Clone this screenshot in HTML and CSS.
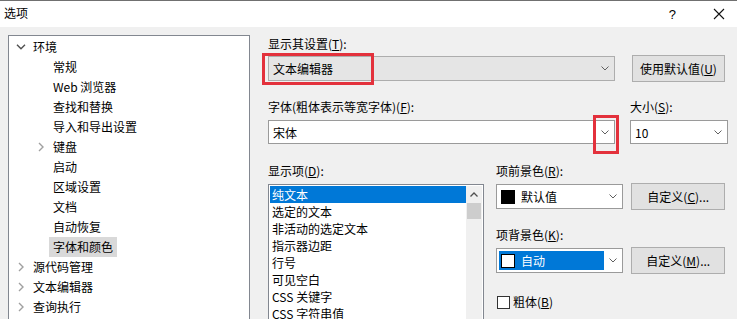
FILE: index.html
```html
<!DOCTYPE html>
<html lang="zh-CN">
<head>
<meta charset="utf-8">
<title>选项</title>
<link rel="stylesheet" href="styles.css">
</head>
<body>
<div class="window">
  <div class="titlebar">
    <span class="title">选项</span>
    <span class="help">?</span>
    <span class="close"><svg width="12" height="12" viewBox="0 0 12 12"><path d="M1 1 L11 11 M11 1 L1 11" stroke="#111" stroke-width="1.1" fill="none"/></svg></span>
  </div>
  <div class="main">
    <div class="tree">
      <div class="node l0"><span class="twisty"><svg width="10" height="6" viewBox="0 0 10 6"><path d="M1 0.8 L5 4.8 L9 0.8" stroke="#505050" stroke-width="1.4" fill="none"/></svg></span><span class="txt">环境</span></div>
      <div class="node l1"><span class="twisty"></span><span class="txt">常规</span></div>
      <div class="node l1"><span class="twisty"></span><span class="txt">Web 浏览器</span></div>
      <div class="node l1"><span class="twisty"></span><span class="txt">查找和替换</span></div>
      <div class="node l1"><span class="twisty"></span><span class="txt">导入和导出设置</span></div>
      <div class="node l1"><span class="twisty"><svg width="6" height="10" viewBox="0 0 6 10"><path d="M1 1 L5 5 L1 9" stroke="#a0a0a0" stroke-width="1.4" fill="none"/></svg></span><span class="txt">键盘</span></div>
      <div class="node l1"><span class="twisty"></span><span class="txt">启动</span></div>
      <div class="node l1"><span class="twisty"></span><span class="txt">区域设置</span></div>
      <div class="node l1"><span class="twisty"></span><span class="txt">文档</span></div>
      <div class="node l1"><span class="twisty"></span><span class="txt">自动恢复</span></div>
      <div class="node l1"><span class="twisty"></span><span class="txt sel">字体和颜色</span></div>
      <div class="node l0"><span class="twisty"><svg width="6" height="10" viewBox="0 0 6 10"><path d="M1 1 L5 5 L1 9" stroke="#a0a0a0" stroke-width="1.4" fill="none"/></svg></span><span class="txt">源代码管理</span></div>
      <div class="node l0"><span class="twisty"><svg width="6" height="10" viewBox="0 0 6 10"><path d="M1 1 L5 5 L1 9" stroke="#a0a0a0" stroke-width="1.4" fill="none"/></svg></span><span class="txt">文本编辑器</span></div>
      <div class="node l0"><span class="twisty"><svg width="6" height="10" viewBox="0 0 6 10"><path d="M1 1 L5 5 L1 9" stroke="#a0a0a0" stroke-width="1.4" fill="none"/></svg></span><span class="txt">查询执行</span></div>
    </div>

    <div class="panel">
      <div class="label">显示其设置(<u>T</u>):</div>
      <div class="row row-show">
        <div class="combo combo-ro combo-wide">
          <span class="ctext">文本编辑器</span>
          <svg class="arrow" width="8" height="5" viewBox="0 0 8 5"><path d="M0.5 0.5 L4 4 L7.5 0.5" stroke="#606060" fill="none"/></svg>
          <div class="mark mark-show"></div>
        </div>
        <div class="btn btn-default">使用默认值(<u>U</u>)</div>
      </div>

      <div class="row row-font">
        <div class="field">
          <div class="label">字体(粗体表示等宽字体)(<u>F</u>):</div>
          <div class="combo combo-wide combo-edit">
            <span class="ctext">宋体</span>
            <svg class="arrow" width="8" height="5" viewBox="0 0 8 5"><path d="M0.5 0.5 L4 4 L7.5 0.5" stroke="#606060" fill="none"/></svg>
            <div class="mark mark-font"></div>
          </div>
        </div>
        <div class="field">
          <div class="label">大小(<u>S</u>):</div>
          <div class="combo combo-size combo-edit">
            <span class="ctext">10</span>
            <svg class="arrow" width="8" height="5" viewBox="0 0 8 5"><path d="M0.5 0.5 L4 4 L7.5 0.5" stroke="#606060" fill="none"/></svg>
          </div>
        </div>
      </div>

      <div class="row row-items">
        <div class="items-col">
          <div class="label">显示项(<u>D</u>):</div>
          <div class="listbox">
            <div class="list">
              <div class="item active">纯文本</div>
              <div class="item">选定的文本</div>
              <div class="item">非活动的选定文本</div>
              <div class="item">指示器边距</div>
              <div class="item">行号</div>
              <div class="item">可见空白</div>
              <div class="item">CSS 关键字</div>
              <div class="item">CSS 字符串值</div>
            </div>
            <div class="scrollbar">
              <div class="sb-up"><svg width="8" height="5" viewBox="0 0 8 5"><path d="M0.5 4.5 L4 1 L7.5 4.5" stroke="#505050" stroke-width="1.3" fill="none"/></svg></div>
              <div class="sb-thumb"></div>
            </div>
          </div>
        </div>

        <div class="props-col">
          <div class="label">项前景色(<u>R</u>):</div>
          <div class="row prop-row">
            <div class="combo combo-color combo-edit">
              <span class="swatch swatch-black"></span>
              <span class="ctext">默认值</span>
              <svg class="arrow" width="8" height="5" viewBox="0 0 8 5"><path d="M0.5 0.5 L4 4 L7.5 0.5" stroke="#606060" fill="none"/></svg>
            </div>
            <div class="btn btn-custom">自定义(<u>C</u>)...</div>
          </div>
          <div class="label label-bg">项背景色(<u>K</u>):</div>
          <div class="row prop-row">
            <div class="combo combo-color combo-edit">
              <span class="focus-sel"><span class="swatch swatch-white"></span><span class="ctext">自动</span></span>
              <svg class="arrow" width="8" height="5" viewBox="0 0 8 5"><path d="M0.5 0.5 L4 4 L7.5 0.5" stroke="#606060" fill="none"/></svg>
            </div>
            <div class="btn btn-custom">自定义(<u>M</u>)...</div>
          </div>
          <div class="check-row">
            <span class="checkbox"></span>
            <span class="check-label">粗体(<u>B</u>)</span>
          </div>
        </div>
      </div>
    </div>
  </div>
</div>
</body>
</html>
```

FILE: styles.css
```css
* { box-sizing: border-box; }

html, body {
  margin: 0;
  padding: 0;
  width: 737px;
  height: 319px;
  overflow: hidden;
  background: #f0f0f0;
}

body {
  font-family: "Noto Sans CJK SC", "Noto Sans", sans-serif;
  font-size: 12px;
  color: #000;
}

u { text-decoration: underline; text-underline-offset: 1px; }

.window {
  width: 737px;
  height: 319px;
  display: flex;
  flex-direction: column;
}

/* Title bar */
.titlebar {
  height: 27px;
  flex: none;
  background: #fff;
  border-top: 1px solid #707070;
  display: flex;
  align-items: center;
  padding-left: 4px;
}
.title {
  font-size: 12px;
  line-height: 16px;
  margin-top: -2px;
}
.help {
  margin-left: auto;
  font-family: "Liberation Sans", sans-serif;
  font-size: 13px;
  margin-right: 37px;
}
.close {
  display: flex;
  margin-right: 12px;
}

/* Main */
.main {
  flex: 1;
  display: flex;
  padding: 8px 0 0 8px;
  min-height: 0;
}

/* Tree */
.tree {
  width: 242px;
  height: 300px;
  flex: none;
  background: #fff;
  border: 1px solid #828790;
  padding-top: 1px;
}
.node {
  height: 20px;
  display: flex;
  align-items: center;
  white-space: nowrap;
}
.node.l0 { padding-left: 3px; }
.node.l1 { padding-left: 23px; }
.twisty {
  width: 17px;
  height: 20px;
  display: flex;
  align-items: center;
  justify-content: center;
  flex: none;
}
.txt {
  padding: 0 4px;
  line-height: 20px;
  height: 20px;
}
.txt.sel { background: #d9d9d9; }

/* Right panel */
.panel {
  margin-left: 18px;
  padding-top: 1px;
  width: 461px;
  display: flex;
  flex-direction: column;
}
.label {
  line-height: 16px;
  height: 16px;
  white-space: nowrap;
}
.row { display: flex; }

.row-show {
  margin-top: 3px;
  align-items: center;
  gap: 17px;
}

.combo {
  position: relative;
  display: flex;
  align-items: center;
  padding-left: 4px;
  border: 1px solid #adadad;
  white-space: nowrap;
}
.combo .arrow {
  margin-left: auto;
  margin-right: 5px;
  flex: none;
}
.combo-ro {
  background: #e5e5e5;
  height: 25px;
}
.combo-edit {
  background: #fff;
  border-color: #9a9a9a;
}
.combo-wide { width: 347px; }

.btn {
  background: #e1e1e1;
  border: 1px solid #adadad;
  display: flex;
  align-items: center;
  justify-content: center;
  white-space: nowrap;
  height: 27px;
}
.btn-default { width: 93px; }

.row-font {
  margin-top: 17px;
  gap: 15px;
}
.row-font .label { margin-bottom: 5px; }
.row-font .combo { height: 24px; }
.combo-size { width: 98px; }

.mark {
  position: absolute;
  border: 3px solid #e3313c;
  pointer-events: none;
}
.mark-show {
  left: -7px;
  top: -4px;
  width: 112px;
  height: 32px;
}
.mark-font {
  left: 324px;
  top: -6px;
  width: 26px;
  height: 39px;
}

/* Items area */
.row-items {
  margin-top: 19px;
  gap: 12px;
}
.items-col {
  width: 216px;
  display: flex;
  flex-direction: column;
}
.items-col .label { margin-bottom: 5px; }
.listbox {
  height: 150px;
  background: #fff;
  border: 1px solid #828790;
  display: flex;
  padding: 1px 1px 0 1px;
}
.list {
  flex: 1;
  min-width: 0;
}
.item {
  height: 17px;
  line-height: 17px;
  padding-left: 2px;
  white-space: nowrap;
}
.item.active {
  background: #0078d7;
  color: #fff;
}
.scrollbar {
  width: 16px;
  flex: none;
  background: #f0f0f0;
  display: flex;
  flex-direction: column;
}
.sb-up {
  height: 17px;
  display: flex;
  align-items: center;
  justify-content: center;
}
.sb-thumb {
  height: 16px;
  margin: 0 1px;
  background: #cdcdcd;
}

.props-col {
  display: flex;
  flex-direction: column;
  width: 229px;
}
.prop-row {
  margin-top: 4px;
  align-items: center;
  gap: 8px;
}
.combo-color {
  width: 128px;
  height: 25px;
}
.btn-custom { width: 94px; }
.swatch {
  width: 14px;
  height: 14px;
  flex: none;
  margin-right: 6px;
}
.swatch-black { background: #000; border: 1px solid #000; }
.swatch-white { background: #fff; border: 1px solid #000; }
.focus-sel {
  display: flex;
  align-items: center;
  background: #0078d7;
  color: #fff;
  width: 105px;
  height: 19px;
  margin-left: -2px;
  padding-left: 2px;
}
.label-bg { margin-top: 17px; }

.check-row {
  margin-top: 20px;
  display: flex;
  align-items: center;
  padding-left: 1px;
}
.checkbox {
  width: 13px;
  height: 13px;
  background: #fff;
  border: 1px solid #333;
  margin-right: 3px;
}
.check-label { line-height: 16px; }
```
